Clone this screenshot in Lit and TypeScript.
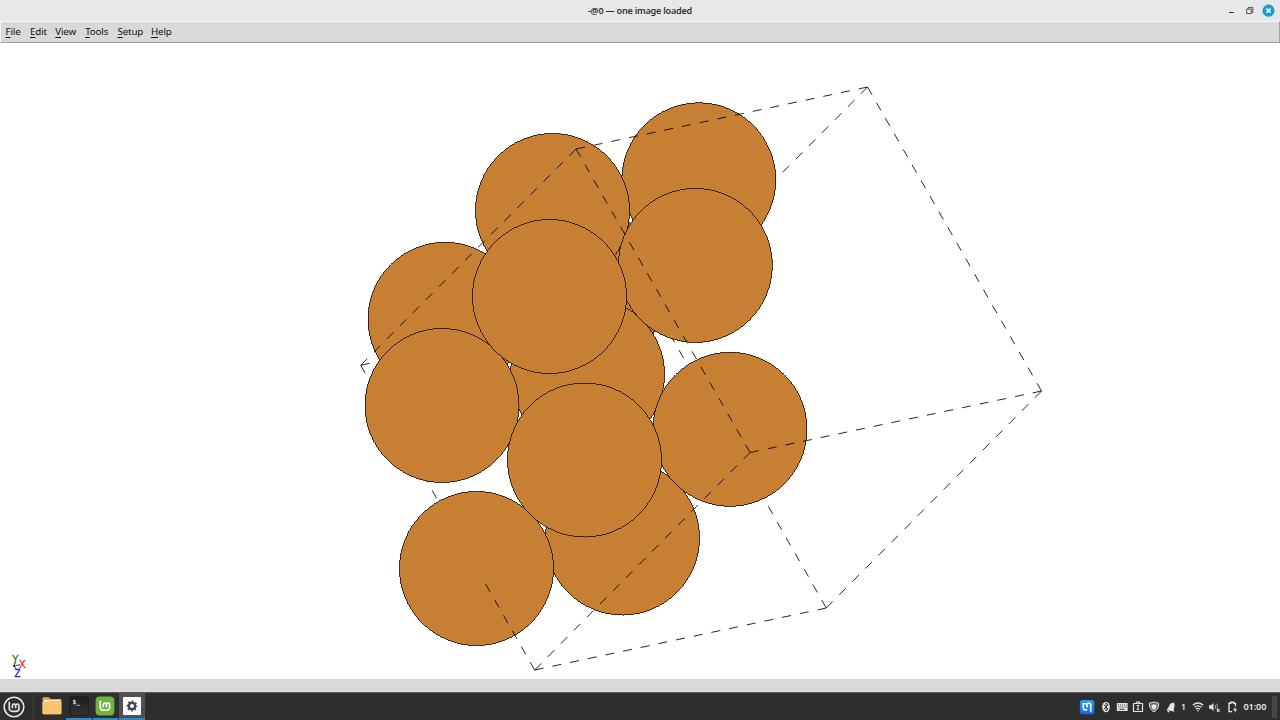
import { LitElement, html, css, svg } from "lit";
import { customElement } from "lit/decorators.js";

type Pt = [number, number];

const ATOMS: Pt[] = [
  [590.5, 289], [698.8, 179.8], [552.5, 210.5], [445, 319.3], [587.5, 374.3], [622.5, 538],
  [695.3, 265.4], [730, 429.3], [476.5, 568.5], [442, 405.5], [549.5, 296.5], [584.5, 460],
];

const P1: Pt = [576, 149], P2: Pt = [867.5, 87], P3: Pt = [1041.5, 391], P4: Pt = [750, 452.5];
const Q1: Pt = [360.7, 365.3], Q2: Pt = [534.7, 670], Q3: Pt = [826.3, 608], HID: Pt = [652.3, 303.3];

// Each edge is split into an odd number of segments; every second one is drawn.
const edge = (a: Pt, b: Pt, n: number, from = 0, to = n) => {
  const at = (k: number) => [a[0] + ((b[0] - a[0]) * k) / n, a[1] + ((b[1] - a[1]) * k) / n];
  let d = "";
  for (let k = from; k < to; k += 2) {
    const s = at(k), e = at(k + 1);
    d += `M${s[0].toFixed(1)} ${s[1].toFixed(1)}L${e[0].toFixed(1)} ${e[1].toFixed(1)}`;
  }
  return svg`<path class="edge" d=${d}/>`;
};

@customElement("atoms-view")
class AtomsView extends LitElement {
  static styles = css`
    :host { display: block; overflow: hidden; background: #fff; }
    svg { display: block; }
    .edge { fill: none; stroke: #000; stroke-width: 0.85; }
    .atom { fill: #c67f33; stroke: #1c1206; stroke-width: 0.85; shape-rendering: crispEdges; }
    .ax { font: 10px "Liberation Sans", sans-serif; text-anchor: middle; stroke-width: 0.3; }
    .y { fill: #16852a; stroke: #16852a; }
    .x { fill: #f01818; stroke: #f01818; }
    .z { fill: #1515dd; stroke: #1515dd; }
    .line { stroke: #222; stroke-width: 0.9; fill: none; }
  `;
  render() {
    return html`<svg width="1280" height="636" viewBox="0 43 1280 636">
      ${edge(P2, HID, 33)}${edge(Q3, HID, 39)}${edge(Q1, HID, 33)}${edge(Q1, Q2, 39, 0, 28)}
      ${ATOMS.map(([x, y]) => svg`<circle class="atom" cx=${x} cy=${y} r="77"/>`)}
      ${edge(P1, P2, 33)}${edge(P2, P3, 39)}${edge(P4, P3, 33)}${edge(P1, P4, 39)}
      ${edge(P1, Q1, 33)}${edge(P4, Q2, 33)}${edge(Q2, Q3, 33)}${edge(Q3, P3, 33)}
      ${edge(Q1, Q2, 39, 28)}
      <path class="line" d="M14.2 666L15.2 662M14.2 666L20 664.7M14.2 666L17 670.5"/>
      <circle cx="14" cy="666" r="0.9"/>
      <text class="ax y" x="15.3" y="663.3">Y</text>
      <text class="ax x" x="22.4" y="667.7">X</text>
      <text class="ax z" x="17.5" y="677">Z</text>
    </svg>`;
  }
}

const mint = (c: string) => svg`<path d="M6.2 5.2v8.2a3.6 3.6 0 0 0 3.6 3.6h4.600a3.600 3.600 0 0 0 3.600-3.600v-3.300a2 2 0 0 0-4 0v3.200M14 13.300v-3.200a2 2 0 0 0-4 0v3.200" fill="none" stroke=${c} stroke-width="2"/>`;

@customElement("task-panel")
class TaskPanel extends LitElement {
  static styles = css`
    :host { display: flex; align-items: stretch; background: #2e2e2e; height: 28px; overflow: hidden; font-family: "Noto Sans", sans-serif; border-top: 1px solid #5c5c5c; box-sizing: border-box; }
    svg { display: block; flex: none; }
    .start { width: 41px; display: flex; align-items: center; padding-left: 3px; box-sizing: border-box; }
    .sep { width: 1px; background: #3d3d3d; margin-left: -8px; margin-right: 5px; }
    .apps { display: flex; }
    .app { width: 26px; display: flex; justify-content: center; align-items: center; box-sizing: border-box; border-bottom: 2px solid transparent; }
    .run { width: 25.5px; border-bottom-color: #1f8fd0; margin-left: 1px; }
    .active { background: #505050; }
    .grow { flex: 1; }
    .tray { display: flex; align-items: center; color: #e6e6e6; }
    .mu { margin-right: 3px; }
    .num { font-size: 8.5px; width: 12px; text-align: center; font-weight: 600; }
    .time { font-size: 9.1px; font-weight: 600; width: 24.5px; white-space: nowrap; margin-left: 3px; letter-spacing: -0.1px; }
    .end { width: 5px; height: 22px; background: #464646; margin: 0 3px 0 4px; }
  `;
  render() {
    return html`
      <div class="start"><svg width="22" height="22" viewBox="0 0 22 22"><circle cx="11" cy="11" r="9.8" fill="none" stroke="#e4e4e4" stroke-width="1.6"/><g transform="translate(1.2 1.4) scale(.82)">${mint("#e4e4e4")}</g></svg></div>
      <div class="sep"></div>
      <div class="apps">
        <div class="app"><svg width="20" height="20" viewBox="0 0 20 20"><path d="M.5 2.5Q.5 1.3 1.7 1.3H7l1.6 1.6H18.2Q19.4 2.9 19.4 4V17.200Q19.400 18.300 18.200 18.300H1.700Q.5 18.300.5 17.200z" fill="#dda956"/><path d="M2 4h16v2H2z" fill="#f6eee0"/><path d="M.5 6.600Q.5 5.800 1.500 5.800H6L8 5H18.400Q19.400 5 19.400 6V17.200Q19.400 18.300 18.200 18.300H1.700Q.5 18.300.5 17.200z" fill="#f8c471"/></svg></div>
        <div class="app run"><svg width="20" height="20" viewBox="0 0 20 20"><defs><linearGradient id="t" x2="0" y2="1"><stop stop-color="#1d1d1d"/><stop offset="1" stop-color="#343434"/></linearGradient></defs><rect x=".8" y=".8" width="18.600" height="18.600" rx="2.600" fill="url(#t)" stroke="#171717" stroke-width=".8"/><text x="3.500" y="7.500" font-family="DejaVu Sans Mono" font-size="6.200" font-weight="700" fill="#e2e2e2">$_</text></svg></div>
        <div class="app run"><svg width="20" height="20" viewBox="0 0 20 20"><rect x=".6" y=".6" width="18.800" height="18.800" rx="4" fill="#6fb23c"/><g transform="translate(.3 .6) scale(.8)">${mint("#fff")}</g></svg></div>
        <div class="app run active"><svg width="20" height="20" viewBox="0 0 20 20"><rect x="1" y="1" width="18" height="18" rx=".8" fill="#fdfdfd"/><circle cx="10" cy="10" r="3.200" fill="none" stroke="#3c4655" stroke-width="2.300"/><circle cx="10" cy="10" r="4.700" fill="none" stroke="#3c4655" stroke-width="1.500" stroke-dasharray="1.900 1.790" stroke-dashoffset=".95"/></svg></div>
      </div>
      <div class="grow"></div>
      <div class="tray">
        <svg class="mu" width="16" height="16" viewBox="0 0 16 16"><defs><linearGradient id="b" x2="0" y2="1"><stop stop-color="#18a5f6"/><stop offset="1" stop-color="#2565ee"/></linearGradient></defs><rect x=".9" y=".9" width="14.300" height="14.300" rx="2.500" fill="url(#b)"/><path d="M4.300 4v4.500a2.400 2.400 0 0 0 2.400 2.400h1.500M8 8.500V5.800a1.800 1.800 0 0 1 3.700 0V12.800M4 4.800h2.500a1.500 1.500 0 0 1 1.500 1.500" fill="none" stroke="#fff" stroke-width="1.600"/></svg>
        <svg width="15" height="16" viewBox="0 0 15 16"><ellipse cx="8" cy="8" rx="3.800" ry="5.200" fill="#e2e2e2"/><path d="M5.900 5.900l4.200 4.200L8 12V4l2.100 1.900-4.200 4.200" fill="none" stroke="#2e2e2e" stroke-width=".9"/></svg>
        <svg width="16" height="16" viewBox="-1 0 16 16"><rect x="2.800" y="4" width="10.800" height="8" rx=".6" fill="#e2e2e2"/><path d="M4 6h8.500M4.500 8h8.500" stroke="#2e2e2e" stroke-width=".9" stroke-dasharray="1 1"/><path d="M5.500 10.300h5" stroke="#2e2e2e" stroke-width=".9"/></svg>
        <svg width="16" height="16" viewBox="-1 0 16 16"><path d="M3.500 4.500h9v8h-9zM6.500 4V3h3v1" fill="none" stroke="#e2e2e2" stroke-width="1.200"/><path d="M8 5.800v5M6.700 6.500h2.600M6.700 10.400h2.600" stroke="#e2e2e2" stroke-width="1"/></svg>
        <svg width="16" height="16" viewBox="-1 0 16 16"><path d="M8 3l4.700 1.200c.2 4-1.500 7-4.700 8.800C4.800 11.200 3.100 8.200 3.300 4.200z" fill="#666" stroke="#e2e2e2" stroke-width="1"/><path d="M8 5.300l2.600.6c0 2.300-.8 3.800-2.600 5-1.800-1.200-2.600-2.700-2.600-5z" fill="#e8e8e8"/></svg>
        <svg width="17" height="16" viewBox="-1 0 17 16"><path d="M4.300 10.900C6 10 6.400 8.500 7.400 6.300 8.500 4 10 3.400 12 3.800c.9 1.500.8 3 .2 4.800-.6 1.900-.5 3 .2 4.200z" fill="#e2e2e2"/><circle cx="6.300" cy="12.400" r="1" fill="#e2e2e2"/></svg>
        <span class="num">1</span>
        <svg width="16" height="16" viewBox="0 0 15 16"><path d="M2.300 6.300Q7.500 1.800 12.700 6.300M4 8.300Q7.500 5.300 11 8.300M5.600 10.200Q7.500 8.500 9.400 10.200" fill="none" stroke="#e2e2e2" stroke-width="1.300"/><path d="M6.200 11.200h2.600L7.500 12.700z" fill="#e2e2e2"/></svg>
        <svg width="18" height="16" viewBox="0 0 18 16"><path d="M3 6.300h2L7.500 4v8L5 9.700H3z" fill="#e2e2e2"/><path d="M9 6q1.200 2 0 4M10.700 4.600q2 3.400 0 6" fill="none" stroke="#a5a5a5" stroke-width="1"/><path d="M11 10.200l2.600 2.600m0-2.600L11 12.800" stroke="#e2e2e2" stroke-width="1.100"/></svg>
        <svg width="17" height="16" viewBox="0 0 17 16"><path d="M8 12.600H5V4.300h1.800V3.300h2.800v1h1.800V7" fill="none" stroke="#e2e2e2" stroke-width="1.400"/><path d="M11.800 7.500L8.700 11.300h2.200l-.6 2.700 3-3.800h-2.200z" fill="#e2e2e2"/></svg>
        <span class="time">01:00</span>
        <div class="end"></div>
      </div>`;
  }
}

const MENUS = [["File", 24.5], ["Edit", 25.3], ["View", 29.9], ["Tools", 32.3], ["Setup", 33.5], ["Help", 30]] as const;

@customElement("app-root")
class AppRoot extends LitElement {
  static styles = css`
    :host { display: flex; flex-direction: column; width: 1280px; height: 720px; overflow: hidden; background: #fff; font-family: "Noto Sans", sans-serif; }
    .title { height: 21px; flex: none; display: grid; grid-template-columns: 1fr auto 1fr; align-items: center; background: #e8e8e8; }
    .name { font-size: 9.1px; font-weight: 600; color: #303438; line-height: 20px; white-space: pre; letter-spacing: -0.24px; padding-top: 1px; }
    .btns { justify-self: end; display: block; }
    .menu { height: 22px; box-sizing: border-box; flex: none; display: flex; align-items: center; background: #d9d9d9; border-top: 1px solid #f6f6f6; border-left: 1px solid #f6f6f6; border-bottom: 1px solid #a0a0a0; border-right: 1px solid #a0a0a0; padding: 0 0 1px 4.5px; font-size: 9.8px; line-height: 18px; color: #111; }
    .item { display: block; white-space: nowrap; letter-spacing: -0.17px; }
    .key { text-decoration: underline; text-underline-offset: 1.5px; text-decoration-thickness: 1px; }
    .view { flex: 1; }
    .status { height: 13px; flex: none; background: #d9d9d9; }
    .bar { flex: none; }
  `;
  render() {
    return html`
      <div class="title"><span></span><span class="name">-@0 — one image loaded</span>
        <svg class="btns" width="60" height="21" viewBox="1220 0 60 21"><path d="M1229 12.500h4.800" stroke="#333" stroke-width="1"/><path d="M1246.700 9h4.600v4.600h-4.600zM1248 8.800V7.600h4.800v4.900h-1.300" fill="none" stroke="#444" stroke-width=".9"/><circle cx="1268.500" cy="10.700" r="6.100" fill="#209ad6"/><path d="M1266.400 8.600l4.200 4.200m0-4.200l-4.200 4.200" stroke="#fff" stroke-width="1.500"/></svg></div>
      <div class="menu">${MENUS.map(([t, w]) => html`<span class="item" style="width:${w}px"><span class="key">${t[0]}</span>${t.slice(1)}</span>`)}</div>
      <atoms-view class="view"></atoms-view>
      <div class="status"></div>
      <task-panel class="bar"></task-panel>`;
  }
}
